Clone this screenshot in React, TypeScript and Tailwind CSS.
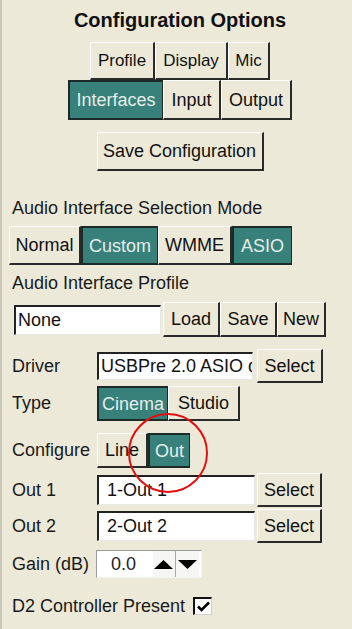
import React from "react";

const font = { fontFamily: '"Liberation Sans", Arial, sans-serif' };

type BtnProps = {
  label: string;
  w: string;
  h?: string;
  size?: string;
  active?: boolean;
};

const Btn = ({ label, w, h = "h-full", size = "text-[18px]", active }: BtnProps) => (
  <button
    type="button"
    className={`${w} ${h} ${size} flex items-center justify-center leading-none ${
      active
        ? "bg-[#38807a] text-[#e4ede9] border-t-2 border-l-2 border-t-[#1e2a28] border-l-[#1e2a28] border-r border-b-2 border-r-[#1e2a28] border-b-[#1e2a28]"
        : "bg-[#ece9d8] text-[#111] border-t border-l border-t-white border-l-white border-r-2 border-b-2 border-r-[#2a2a2a] border-b-[#2a2a2a]"
    }`}
  >
    {label}
  </button>
);

const Field = ({ value, w, h, pl }: { value: string; w: string; h: string; pl: string }) => (
  <div
    className={`${w} ${h} ${pl} bg-white flex items-center overflow-hidden whitespace-nowrap text-[18px] text-[#111] border-t-2 border-l-2 border-t-[#222] border-l-[#222] border-r border-b border-r-[#e8e8e8] border-b-[#e8e8e8]`}
  >
    {value}
  </div>
);

const Label = ({ text }: { text: string }) => (
  <span className="w-[85px] shrink-0 text-[18px] text-[#1a1a1a]">{text}</span>
);

export default function App() {
  return (
    <div
      style={font}
      className="relative w-[352px] h-[629px] bg-[#ece9d8] border-l-2 border-l-[#c9c5b6] overflow-hidden flex flex-col"
    >
      <div className="ml-[6px] w-[344px] flex flex-col items-center">
        <h1 className="mt-[8px] h-[24px] leading-[24px] text-[20px] font-bold text-[#111]">
          Configuration Options
        </h1>
        <div className="mt-[10px] h-[38px] flex">
          <Btn label="Profile" w="w-[65px]" size="text-[17px]" />
          <Btn label="Display" w="w-[73px]" size="text-[17px]" />
          <Btn label="Mic" w="w-[42px]" size="text-[17px]" />
        </div>
        <div className="h-[40px] flex">
          <Btn label="Interfaces" w="w-[95px]" active />
          <Btn label="Input" w="w-[58px]" />
          <Btn label="Output" w="w-[71px]" />
        </div>
        <div className="mt-[12px] h-[39px] flex">
          <Btn label="Save Configuration" w="w-[167px]" />
        </div>
      </div>

      <p className="mt-[26px] ml-[10px] h-[22px] leading-[22px] text-[18px] text-[#1a1a1a]">
        Audio Interface Selection Mode
      </p>
      <div className="mt-[7px] ml-[7px] h-[39px] flex">
        <Btn label="Normal" w="w-[72px]" />
        <Btn label="Custom" w="w-[77px]" active />
        <Btn label="WMME" w="w-[74px]" />
        <Btn label="ASIO" w="w-[60px]" active />
      </div>

      <p className="mt-[7px] ml-[10px] h-[22px] leading-[22px] text-[18px] text-[#1a1a1a]">
        Audio Interface Profile
      </p>
      <div className="mt-[8px] ml-[12px] h-[35px] flex items-center">
        <Field value="None" w="w-[147px]" h="h-[30px]" pl="pl-[2px]" />
        <div className="ml-[2px] h-full flex">
          <Btn label="Load" w="w-[57px]" />
          <Btn label="Save" w="w-[57px]" />
          <Btn label="New" w="w-[49px]" />
        </div>
      </div>

      <div className="mt-[12px] ml-[10px] h-[34px] flex items-center">
        <Label text="Driver" />
        <Field value="USBPre 2.0 ASIO driver" w="w-[156px]" h="h-[28px]" pl="pl-[2px]" />
        <div className="ml-[4px] h-full flex">
          <Btn label="Select" w="w-[66px]" />
        </div>
      </div>

      <div className="mt-[3px] ml-[10px] h-[35px] flex items-center">
        <Label text="Type" />
        <div className="h-full flex">
          <Btn label="Cinema" w="w-[71px]" active />
          <Btn label="Studio" w="w-[72px]" />
        </div>
      </div>

      <div className="mt-[12px] ml-[10px] h-[35px] flex items-center">
        <Label text="Configure" />
        <div className="h-full flex">
          <Btn label="Line" w="w-[51px]" />
          <Btn label="Out" w="w-[42px]" active />
        </div>
      </div>

      <div className="mt-[5px] ml-[10px] h-[34px] flex items-center">
        <Label text="Out 1" />
        <Field value="1-Out 1" w="w-[158px]" h="h-[30px]" pl="pl-[8px]" />
        <div className="ml-[2px] h-full flex">
          <Btn label="Select" w="w-[65px]" />
        </div>
      </div>

      <div className="mt-[2px] ml-[10px] h-[34px] flex items-center">
        <Label text="Out 2" />
        <Field value="2-Out 2" w="w-[158px]" h="h-[30px]" pl="pl-[8px]" />
        <div className="ml-[2px] h-full flex">
          <Btn label="Select" w="w-[65px]" />
        </div>
      </div>

      <div className="mt-[7px] ml-[10px] h-[28px] flex items-center">
        <span className="w-[84px] shrink-0 text-[18px] text-[#1a1a1a]">Gain (dB)</span>
        <div className="w-[106px] h-full flex items-center bg-white border-t border-l border-t-[#9a9a9a] border-l-[#9a9a9a] border-r border-b border-r-[#f4f4f4] border-b-[#f4f4f4]">
          <span className="ml-[14px] w-[42px] text-[18px] text-[#222]">0.0</span>
          <div className="h-full flex items-center bg-[#f6f6f4]">
            <svg width="22" height="28" viewBox="0 0 22 28">
              <polygon points="1,19 20,19 10.5,10" fill="#000" />
            </svg>
            <div className="w-px h-full bg-[#a8a8a8]" />
            <svg width="23" height="28" viewBox="0 0 23 28">
              <polygon points="2,10 21,10 11.5,19" fill="#000" />
            </svg>
          </div>
        </div>
      </div>

      <div className="mt-[19px] ml-[10px] h-[18px] flex items-center">
        <span className="text-[18px] text-[#1a1a1a]">D2 Controller Present</span>
        <div className="ml-[8px] w-[19px] h-[18px] bg-white flex items-center justify-center border-t-2 border-l-2 border-t-[#111] border-l-[#111] border-r border-b border-r-[#d0d0d0] border-b-[#d0d0d0]">
          <svg width="13" height="11" viewBox="0 0 13 11">
            <path d="M1 5.5 L4.5 9 L12 1.5" stroke="#000" strokeWidth="2.6" fill="none" />
          </svg>
        </div>
      </div>

      <div className="absolute left-[126px] top-[413px] w-[80px] h-[80px] rounded-full border-2 border-[#e01010] pointer-events-none" />
    </div>
  );
}
